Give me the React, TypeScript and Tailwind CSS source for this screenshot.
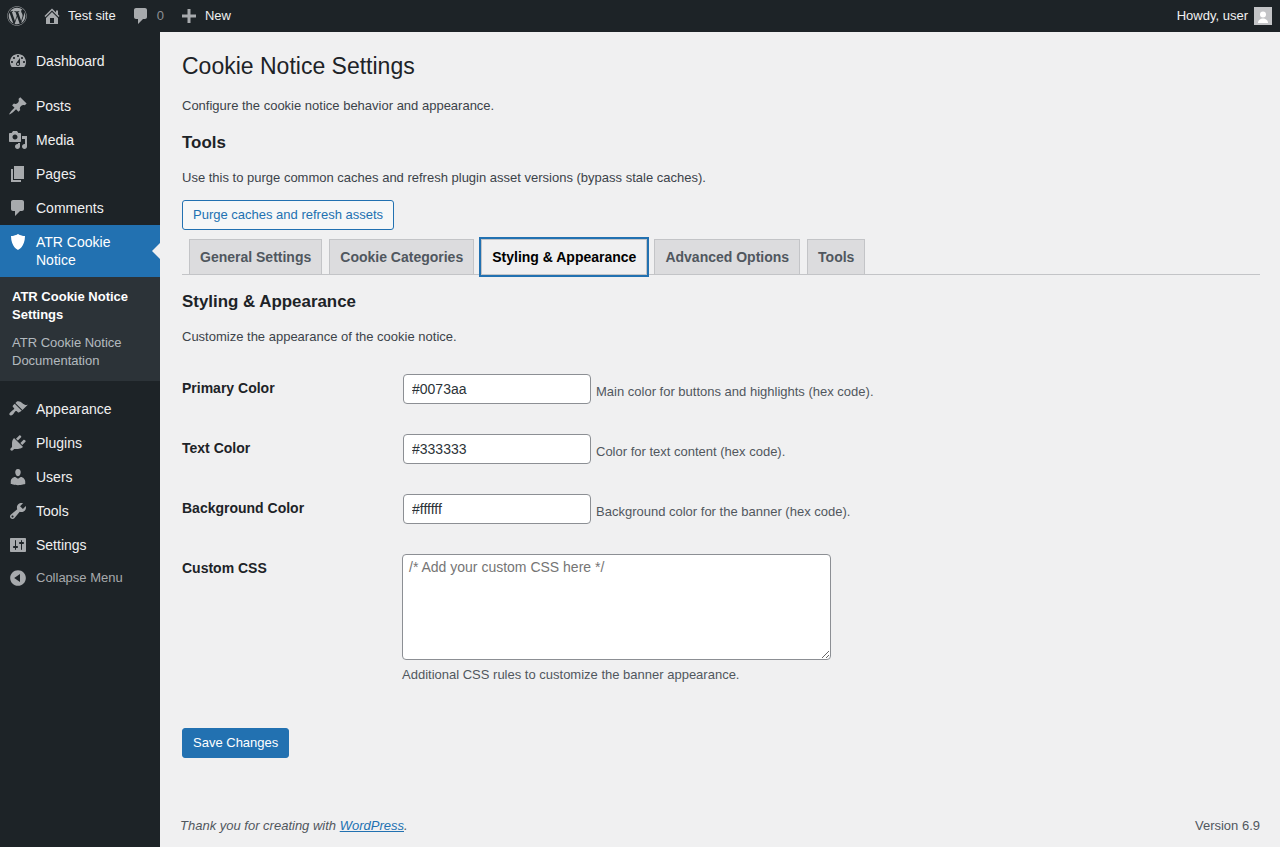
import React from 'react';
import { FaWordpress } from 'react-icons/fa';

const icons = {
  dashboard:
    'M3.76 16h12.48c1.1-1.37 1.76-3.11 1.76-5 0-4.42-3.58-8-8-8s-8 3.58-8 8c0 1.89.66 3.63 1.76 5zM10 4c.55 0 1 .45 1 1s-.45 1-1 1-1-.45-1-1 .45-1 1-1zM6 6c.55 0 1 .45 1 1s-.45 1-1 1-1-.45-1-1 .45-1 1-1zm8 0c.55 0 1 .45 1 1s-.45 1-1 1-1-.45-1-1 .45-1 1-1zm-5.37 5.55L12 7v6c0 1.1-.9 2-2 2s-2-.9-2-2c0-.57.24-1.08.63-1.45zM4 10c.55 0 1 .45 1 1s-.45 1-1 1-1-.45-1-1 .45-1 1-1zm12 0c.55 0 1 .45 1 1s-.45 1-1 1-1-.45-1-1 .45-1 1-1zm-5 3c0-.55-.45-1-1-1s-1 .45-1 1 .45 1 1 1 1-.45 1-1z',
  posts:
    'M10.44 3.02l1.82-1.82 6.36 6.35-1.83 1.82c-1.05-.68-2.48-.57-3.41.36l-.75.75c-.92.93-1.04 2.35-.35 3.41l-1.83 1.82-2.41-2.41-2.8 2.79c-.42.42-3.38 2.71-3.8 2.29s1.86-3.39 2.28-3.81l2.79-2.79L4.1 9.36l1.83-1.82c1.05.69 2.48.57 3.4-.36l.75-.75c.93-.92 1.05-2.35.36-3.41z',
  media:
    'M13 11V4c0-.55-.45-1-1-1h-1.67L9 1H5L3.67 3H2c-.55 0-1 .45-1 1v7c0 .55.45 1 1 1h10c.55 0 1-.45 1-1zM7 4.5c1.38 0 2.5 1.12 2.5 2.5S8.38 9.5 7 9.5 4.5 8.38 4.5 7 5.62 4.5 7 4.5zM14 6h5v10.5c0 1.38-1.12 2.5-2.5 2.5S14 17.88 14 16.5s1.12-2.5 2.5-2.5c.17 0 .34.02.5.05V9h-3V6zm-4 8.05V13h2v3.5c0 1.38-1.12 2.5-2.5 2.5S7 17.88 7 16.5 8.12 14 9.5 14c.17 0 .34.02.5.05z',
  pages: 'M6 15V2h10v13H6zm-1 1h8v2H3V5h2v11z',
  comments:
    'M5 2h9c1.1 0 2 .9 2 2v7c0 1.1-.9 2-2 2h-2l-5 5v-5H5c-1.1 0-2-.9-2-2V4c0-1.1.9-2 2-2z',
  shield: 'M10 2s3 2 7 2c0 11-7 14-7 14S3 15 3 4c4 0 7-2 7-2z',
  appearance:
    'M14.48 11.06L7.41 3.99l1.5-1.5c.5-.56 2.3-.47 3.51.32 1.21.8 1.43 1.28 2.91 2.1 1.18.64 2.45 1.26 4.45.85zm-.71.71L6.7 4.7 4.93 6.47c-.39.39-.39 1.02 0 1.41l1.06 1.06c.39.39.39 1.03 0 1.42-.6.6-1.43 1.11-2.21 1.69-.35.26-.7.53-1.01.84C1.43 13.71.96 15.28 1.7 16.02c.74.74 2.31.27 3.15-.57.31-.31.58-.66.85-1.01.58-.78 1.09-1.61 1.69-2.21.39-.39 1.02-.39 1.41 0l1.06 1.06c.39.39 1.02.39 1.41 0z',
  plugins:
    'M13.11 4.36L9.87 7.6 8 5.73l3.24-3.24c.35-.34 1.05-.2 1.56.32.52.51.66 1.21.31 1.55zm-8 1.77l.91-1.12 9.01 9.01-1.19.84c-.71.71-2.63 1.16-3.82 1.16H6.14L4.9 17.26c-.59.59-1.54.59-2.12 0-.59-.58-.59-1.53 0-2.12l1.24-1.24v-3.88c0-1.13.4-3.19 1.09-3.89zm7.26 3.97l3.24-3.24c.34-.35 1.04-.21 1.55.31.52.51.66 1.21.31 1.55l-3.24 3.25z',
  users:
    'M10 9.25c-2.27 0-2.73-3.44-2.73-3.44C7 4.02 7.82 2 9.97 2c2.16 0 2.98 2.02 2.71 3.81 0 0-.41 3.44-2.68 3.44zm0 2.57L12.72 10c2.39 0 4.52 2.33 4.52 4.53v2.49s-3.65 1.13-7.24 1.13c-3.65 0-7.24-1.13-7.24-1.13v-2.49c0-2.25 1.94-4.48 4.47-4.48z',
  tools:
    'M16.68 9.77c-1.34 1.34-3.3 1.67-4.95.99l-5.41 6.52c-.99.99-2.59.99-3.58 0s-.99-2.59 0-3.57l6.52-5.42c-.68-1.65-.35-3.61.99-4.95 1.28-1.28 3.12-1.62 4.72-1.06l-2.89 2.89 2.82 2.82 2.86-2.87c.53 1.58.18 3.39-1.08 4.65zM3.81 16.21c.4.39 1.04.39 1.43 0 .4-.4.4-1.04 0-1.43-.39-.4-1.03-.4-1.43 0-.39.39-.39 1.03 0 1.43z',
  settings:
    'M18 16V4c0-.55-.45-1-1-1H3c-.55 0-1 .45-1 1v12c0 .55.45 1 1 1h14c.55 0 1-.45 1-1zM8 11h1c.55 0 1 .45 1 1s-.45 1-1 1H8v1.5c0 .28-.22.5-.5.5s-.5-.22-.5-.5V13H6c-.55 0-1-.45-1-1s.45-1 1-1h1V5.5c0-.28.22-.5.5-.5s.5.22.5.5V11zm5-2h-1c-.55 0-1-.45-1-1s.45-1 1-1h1V5.5c0-.28.22-.5.5-.5s.5.22.5.5V7h1c.55 0 1 .45 1 1s-.45 1-1 1h-1v5.5c0 .28-.22.5-.5.5s-.5-.22-.5-.5V9z',
  collapse:
    'M10 2.16c4.33 0 7.84 3.51 7.84 7.84s-3.51 7.84-7.84 7.84S2.16 14.33 2.16 10 5.71 2.16 10 2.16zm2 11.72V6.12L6.18 9.97z',
  home: 'M16 8.5l1.53 1.53-1.06 1.06L10 4.62l-6.47 6.47-1.06-1.06L10 2.5l4 4v-2h2v4zm-6-2.46l6 5.99V18H4v-5.97zM12 17v-5H8v5h4z',
  plus: 'M17 8.5v3h-5.5V17h-3v-5.5H3v-3h5.5V3h3v5.5H17z',
};

function Dashicon({ d, className }: { d: string; className?: string }) {
  return (
    <svg viewBox="0 0 20 20" fill="currentColor" className={className}>
      <path d={d} />
    </svg>
  );
}

function MenuItem({ icon, label }: { icon: string; label: string }) {
  return (
    <a className="flex h-[34px] items-center text-[14px] text-[#f0f0f1]">
      <span className="flex w-[36px] justify-center text-[#a7aaad]">
        <Dashicon d={icon} className="h-5 w-5" />
      </span>
      <span>{label}</span>
    </a>
  );
}

function Sidebar() {
  return (
    <aside className="w-[160px] shrink-0 bg-[#1d2327] pt-[12px]">
      <MenuItem icon={icons.dashboard} label="Dashboard" />
      <div className="h-[11px]" />
      <MenuItem icon={icons.posts} label="Posts" />
      <MenuItem icon={icons.media} label="Media" />
      <MenuItem icon={icons.pages} label="Pages" />
      <MenuItem icon={icons.comments} label="Comments" />
      <div className="relative flex h-[52px] bg-[#2271b1] text-[14px] leading-[18px] text-white">
        <span className="flex w-[36px] justify-center pt-[7px]">
          <Dashicon d={icons.shield} className="h-5 w-5" />
        </span>
        <span className="w-[100px] pt-[8px]">ATR Cookie Notice</span>
        <span className="absolute right-0 top-[18px] h-0 w-0 border-y-[8px] border-r-[8px] border-y-transparent border-r-[#f0f0f1]" />
      </div>
      <div className="bg-[#2c3338] px-[12px] pb-[5px] pt-[7px] text-[13px] leading-[18px]">
        <div className="py-[4px] font-semibold text-white">ATR Cookie Notice Settings</div>
        <div className="py-[6px] text-[#f0f6fc]/70">ATR Cookie Notice Documentation</div>
      </div>
      <div className="h-[11px]" />
      <MenuItem icon={icons.appearance} label="Appearance" />
      <MenuItem icon={icons.plugins} label="Plugins" />
      <MenuItem icon={icons.users} label="Users" />
      <MenuItem icon={icons.tools} label="Tools" />
      <MenuItem icon={icons.settings} label="Settings" />
      <div className="flex h-[32px] items-center text-[13px] text-[#a7aaad]">
        <span className="flex w-[36px] justify-center">
          <Dashicon d={icons.collapse} className="h-5 w-5" />
        </span>
        <span>Collapse Menu</span>
      </div>
    </aside>
  );
}

function AdminBar() {
  return (
    <header className="flex h-8 items-center justify-between bg-[#1d2327] text-[13px] text-[#f0f0f1]">
      <div className="flex items-center">
        <FaWordpress className="ml-[7px] h-5 w-5 text-[#a7aaad]" />
        <Dashicon d={icons.home} className="ml-[15px] h-5 w-5 text-[#a7aaad]" />
        <span className="ml-[6px]">Test site</span>
        <Dashicon d={icons.comments} className="ml-[15px] h-5 w-5 text-[#a7aaad]" />
        <span className="ml-[6px] text-[#8c8f94]">0</span>
        <Dashicon d={icons.plus} className="ml-[15px] h-5 w-5 text-[#a7aaad]" />
        <span className="ml-[6px]">New</span>
      </div>
      <div className="flex items-center pr-[8px]">
        <span>Howdy, user</span>
        <svg viewBox="0 0 18 18" className="ml-[6px] h-[18px] w-[18px] bg-[#c3c4c7]">
          <circle cx="9" cy="7.5" r="3" fill="#fff" />
          <path d="M4 16c0-3 2.5-4.5 5-4.5s5 1.5 5 4.5z" fill="#fff" />
        </svg>
      </div>
    </header>
  );
}

const tabs = ['General Settings', 'Cookie Categories', 'Styling & Appearance', 'Advanced Options', 'Tools'];

function Tabs() {
  return (
    <nav className="mt-[9px] flex h-[36px] gap-[7px] border-b border-[#c3c4c7] pl-[7px]">
      {tabs.map((tab) =>
        tab === 'Styling & Appearance' ? (
          <a
            key={tab}
            className="z-10 h-[36px] border border-[#c3c4c7] bg-[#f0f0f1] px-[10px] py-[5px] text-[14px] font-semibold leading-[24px] text-black ring-2 ring-[#2271b1]"
          >
            {tab}
          </a>
        ) : (
          <a
            key={tab}
            className="h-[36px] border border-[#c3c4c7] bg-[#dcdcde] px-[10px] py-[5px] text-[14px] font-semibold leading-[24px] text-[#50575e]"
          >
            {tab}
          </a>
        ),
      )}
    </nav>
  );
}

const colorRows = [
  { label: 'Primary Color', value: '#0073aa', help: 'Main color for buttons and highlights (hex code).' },
  { label: 'Text Color', value: '#333333', help: 'Color for text content (hex code).' },
  { label: 'Background Color', value: '#ffffff', help: 'Background color for the banner (hex code).' },
];

function ColorRow({ label, value, help }: { label: string; value: string; help: string }) {
  return (
    <div className="flex h-[60px] pt-[15px]">
      <label className="w-[220px] pt-[5px] text-[14px] font-semibold leading-[18px] text-[#1d2327]">{label}</label>
      <input
        type="text"
        defaultValue={value}
        className="ml-[1px] h-[30px] w-[188px] rounded-[4px] border border-[#8c8f94] bg-white px-[8px] text-[14px] text-[#2c3338]"
      />
      <span className="ml-[5px] pt-[9px] text-[13px] leading-[18px] text-[#50575e]">{help}</span>
    </div>
  );
}

export default function App() {
  return (
    <div className="flex min-h-screen flex-col bg-[#f0f0f1] font-['Liberation_Sans',Arial,sans-serif] text-[13px] leading-[18px] text-[#3c434a]">
      <AdminBar />
      <div className="flex flex-1">
        <Sidebar />
        <main className="flex min-w-0 flex-1 flex-col pl-[20px] pr-[20px]">
          <div className="flex-1 pl-[2px]">
            <h1 className="mt-[19px] text-[23px] font-normal leading-[30px] text-[#1d2327]">Cookie Notice Settings</h1>
            <p className="mt-[16px]">Configure the cookie notice behavior and appearance.</p>
            <h2 className="mt-[17px] text-[16.9px] font-semibold leading-[22px] text-[#1d2327]">Tools</h2>
            <p className="mt-[15px]">Use this to purge common caches and refresh plugin asset versions (bypass stale caches).</p>
            <button className="mt-[13px] block h-[30px] rounded-[3px] border border-[#2271b1] bg-[#f6f7f7] px-[10px] text-[13px] text-[#2271b1]">
              Purge caches and refresh assets
            </button>
            <Tabs />
            <h2 className="mt-[16px] text-[16.9px] font-semibold leading-[22px] text-[#1d2327]">Styling &amp; Appearance</h2>
            <p className="mt-[15px]">Customize the appearance of the cookie notice.</p>
            <div className="mt-[13px]">
              {colorRows.map((row) => (
                <ColorRow key={row.label} {...row} />
              ))}
              <div className="flex pt-[15px]">
                <label className="w-[220px] pt-[5px] text-[14px] font-semibold leading-[18px] text-[#1d2327]">Custom CSS</label>
                <div>
                  <textarea
                    rows={6}
                    placeholder="/* Add your custom CSS here */"
                    className="block h-[106px] w-[429px] rounded-[4px] border border-[#8c8f94] bg-white px-[6px] py-0 text-[14px] leading-[24px] text-[#2c3338] placeholder:text-[#757575]"
                  />
                  <p className="mt-[6px] text-[13px] text-[#50575e]">Additional CSS rules to customize the banner appearance.</p>
                </div>
              </div>
            </div>
            <button className="mt-[44px] block h-[30px] rounded-[3px] border border-[#2271b1] bg-[#2271b1] px-[10px] text-[13px] text-white">
              Save Changes
            </button>
          </div>
          <footer className="flex justify-between pb-[12px] text-[13px] text-[#50575e]">
            <span className="italic">
              Thank you for creating with <a className="text-[#2271b1] underline">WordPress</a>.
            </span>
            <span>Version 6.9</span>
          </footer>
        </main>
      </div>
    </div>
  );
}
